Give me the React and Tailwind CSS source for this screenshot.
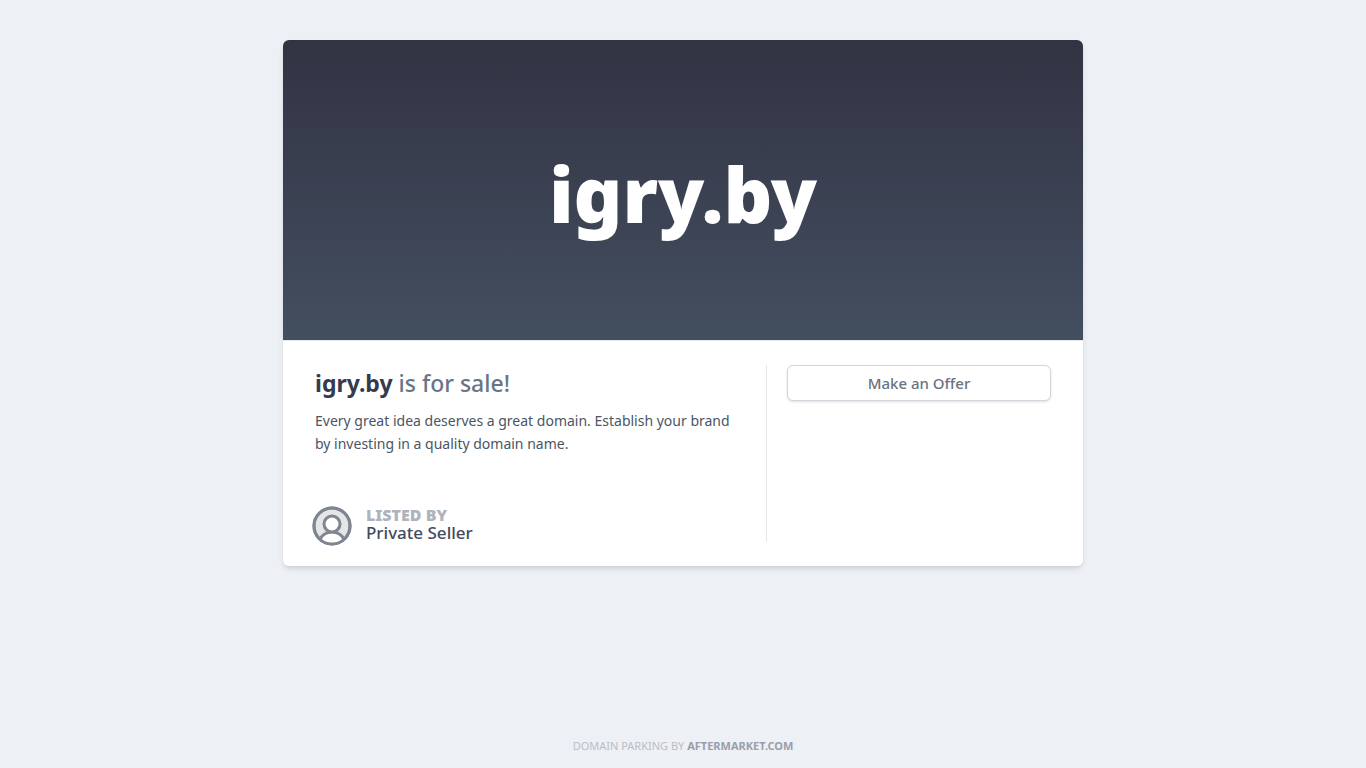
const domain = 'igry.by'

function UserCircle() {
  return (
    <svg className="-ml-[3px] h-10 w-10 shrink-0" viewBox="0 0 40 40" fill="none" stroke="#808691" strokeWidth="3" aria-hidden="true">
      <circle cx="20" cy="20" r="18" fill="#e4e6e8" />
      <path d="M8 33C11 28 15.2 26 20 26s9 2 12 7c-3 3.200-7 5-12 5s-9-1.800-12-5z" fill="#fff" stroke="none" />
      <path d="M8 33C11 28 15.2 26 20 26s9 2 12 7" />
      <circle cx="20" cy="20" r="18" />
      <circle cx="20" cy="18" r="8" fill="#fff" />
    </svg>
  )
}

function Hero() {
  return (
    <header className="flex h-[300px] items-center justify-center rounded-t-md bg-linear-to-b from-[#323343] to-[#434f60] px-8 pt-2">
      <h1 className="text-[76px] leading-none font-black text-white">{domain}</h1>
    </header>
  )
}

function Seller() {
  return (
    <div className="flex items-center gap-3.5">
      <UserCircle />
      <div className="pb-1">
        <div className="text-base leading-[18px] font-black text-[#aeb3be] uppercase">Listed by</div>
        <div className="text-[17px] leading-[18px] font-medium text-[#434b5c]">Private Seller</div>
      </div>
    </div>
  )
}

export default function App() {
  return (
    <div className="flex min-h-screen flex-col bg-[#edf0f5] font-['Noto_Sans','Open_Sans',sans-serif]">
      <main className="mx-auto w-full max-w-[800px] flex-1 pt-10">
        <div className="rounded-md bg-white shadow-md">
          <Hero />
          <div className="flex border-t border-gray-200 px-8 py-6">
            <section className="-mb-1 flex min-h-[181px] flex-1 flex-col justify-between pr-8">
              <div>
                <h2 className="text-[23px] leading-9 font-medium text-[#687587]">
                  <strong className="font-bold text-[#343b4e]">{domain}</strong> is for sale!
                </h2>
                <p className="mt-2 text-[14px] leading-[23px] text-[#4b5563]">
                  Every great idea deserves a great domain. Establish your brand by investing in a quality domain name.
                </p>
              </div>
              <Seller />
            </section>
            <aside className="w-[285px] border-l border-gray-200 pl-5">
              <button
                type="button"
                className="h-9 w-full cursor-pointer rounded-md border border-gray-300 bg-white text-[15px] font-medium text-[#6b7280] shadow-sm hover:bg-gray-50">
                Make an Offer
              </button>
            </aside>
          </div>
        </div>
      </main>

      <footer className="py-4 text-center text-[11px] leading-3 text-[#b8bec6] uppercase">
        Domain parking by <a href="#" className="font-bold text-[#989fa9]">Aftermarket.com</a>
      </footer>
    </div>
  )
}
